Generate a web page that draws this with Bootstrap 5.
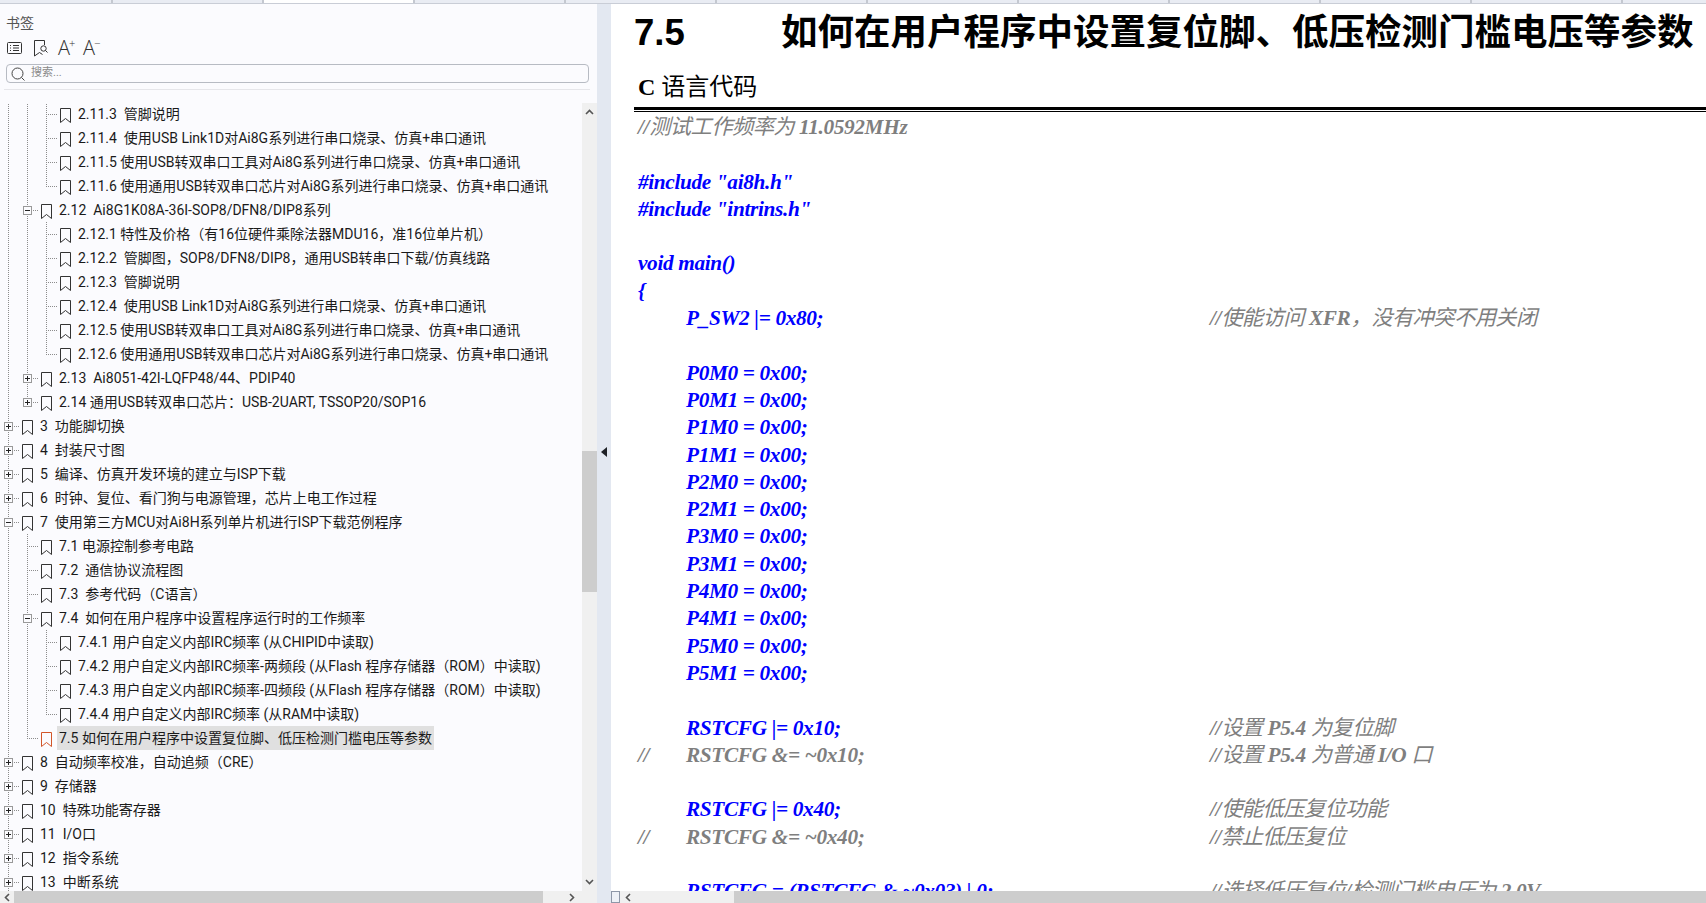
<!DOCTYPE html>
<html lang="zh-CN">
<head>
<meta charset="UTF-8">
<title>书签</title>
<link href="https://cdn.jsdelivr.net/npm/bootstrap@5.3.0/dist/css/bootstrap.min.css" rel="stylesheet">
<style>
body { height: 903px; overflow: hidden; background: #fff; color: #1a1a1a; font-family: "Roboto", "Noto Sans CJK SC", sans-serif; }

/* tab strip */
.tabs { height: 4px; background: #e9ecf3; border-bottom: 1px solid #c9cdd6; }
.tabs i { width: 151px; flex: none; border-right: 2px solid #c4c8d0; }
.tabs i:first-child { width: 113px; }
.tabs i.on { background: #fff; }

/* bookmarks panel */
.panel { width: 597px; flex: none; background: #fbfbfe; }
.panel-title { font-size: 14px; line-height: 20px; color: #555; padding: 9px 0 0 6px; height: 31px; }
.tools { height: 26px; padding-left: 7px; gap: 12px; color: #333; }
.tools svg { display: block; }
.aa { font-family: "Open Sans", sans-serif; font-weight: 300; font-size: 20px; line-height: 22px; width: 15px; color: #333; margin-left: -2px; margin-right: 0; white-space: nowrap; }
.aa sup { font-size: 11px; top: -.75em; margin-left: -1px; }
.search { height: 19px; margin: 3px 8px 0 6px; border: 1px solid #b7bbc3; border-radius: 4px; padding-left: 4px; gap: 6px; background: #fbfbfe; font-size: 11px; color: #8a8a8a; }
.panel-sep { height: 1px; background: #e6e6ea; margin: 6px 7px 13px 4px; }

/* tree */
.tree { height: 788px; overflow: hidden; font-size: 14px; line-height: 24px; }
.tree span { white-space: pre; }
.tr { height: 24px; display: flex; align-items: flex-start; }
.tr:first-child { margin-top: -1px; }
.c { display: block; width: 19px; height: 24px; flex: none; }
.v { background: repeating-linear-gradient(#8c8c8c 0 1px, transparent 1px 2px) 8px 0 / 1px 100% no-repeat; }
.t { background: repeating-linear-gradient(#8c8c8c 0 1px, transparent 1px 2px) 8px 0 / 1px 100% no-repeat, repeating-linear-gradient(90deg, #8c8c8c 0 1px, transparent 1px 2px) 8px 12px / 11px 1px no-repeat; }
.l { background: repeating-linear-gradient(#8c8c8c 0 1px, transparent 1px 2px) 8px 0 / 1px 12px no-repeat, repeating-linear-gradient(90deg, #8c8c8c 0 1px, transparent 1px 2px) 8px 12px / 11px 1px no-repeat; }
.x { display: block; width: 9px; height: 9px; margin: 8px 0 0 4px; border: 1px solid #999; background: #fbfbfe; }
.x.minus { background: linear-gradient(#222, #222) center / 5px 1px no-repeat #fbfbfe; }
.x.plus { background: linear-gradient(#222, #222) center / 5px 1px no-repeat, linear-gradient(#222, #222) center / 1px 5px no-repeat, #fbfbfe; }
.bm { width: 11px; height: 15px; flex: none; margin: 6px 7px 0 3px; color: #333; }
.tr.on .bm { color: #d2562a; margin-right: 5px; }
.tr.on span { background: #e0e0e0; padding: 0 2px; }

/* scrollbars */
.vbar { width: 15px; height: 788px; flex: none; background: #f0f0f0; }
.vbar .thumb { width: 15px; height: 141px; margin-top: 336px; margin-bottom: auto; background: #cdcdcd; }
.chev { display: block; flex: none; color: #555; }
.hbar { height: 12px; background: #f0f0f0; }
.hbar .chev { margin-top: 2px; }
.hbar .thumb { background: #cdcdcd; height: 12px; }
.corner { width: 15px; background: #f0f0f0; }

.splitter { width: 14px; flex: none; background: #e3e8f1; padding-top: 443px; padding-left: 4px; }
.splitter div { width: 0; height: 0; border: 5px solid transparent; border-left-width: 0; border-right: 6px solid #1e2126; }

/* document */
.doc { min-width: 0; background: #fff; }
.page { height: 887px; overflow: hidden; padding-left: 23px; }
.ttl { height: 58px; font: bold 36.5px/58px "Liberation Sans", "Noto Sans CJK SC", sans-serif; color: #000; white-space: nowrap; }
.ttl b { width: 147px; flex: none; }
.sec { height: 45px; padding: 5px 0 0 4px; font: 24px/40px "Liberation Serif", "Noto Sans CJK SC", serif; color: #000; }
.rule { height: 5px; border-top: 3px solid #000; border-bottom: 1px solid #000; margin-bottom: 2px; }
.ln { height: 27.3px; padding-left: 4px; font: italic bold 21.3px/27.3px "Liberation Serif", "Noto Sans CJK SC", serif; letter-spacing: -.35px; white-space: pre; display: flex; }
.ln .a { width: 48px; flex: none; }
.ln .b { width: 524px; flex: none; }
.ln em { font-weight: 400; letter-spacing: -.6px; }
.k { color: #0000ff; }
.g { color: #7f7f7f; }
.pageno { width: 9px; height: 12px; flex: none; background: #eef1f7; border: 1px solid #8e97a8; }
</style>
</head>
<body>
<svg width="0" height="0" class="d-block">
  <symbol id="bm" viewBox="0 0 11 15"><path d="M.5.5h10v14l-5-4-5 4z" fill="none" stroke="currentColor"/></symbol>
  <symbol id="up" viewBox="0 0 9 6"><path d="M1 5l3.5-3.5L8 5" fill="none" stroke="currentColor" stroke-width="1.6"/></symbol>
  <symbol id="dn" viewBox="0 0 9 6"><path d="M1 1l3.5 3.5L8 1" fill="none" stroke="currentColor" stroke-width="1.6"/></symbol>
  <symbol id="lf" viewBox="0 0 6 9"><path d="M5 1L1.5 4.5 5 8" fill="none" stroke="currentColor" stroke-width="1.6"/></symbol>
  <symbol id="rt" viewBox="0 0 6 9"><path d="M1 1l3.5 3.5L1 8" fill="none" stroke="currentColor" stroke-width="1.6"/></symbol>
</svg>

<div class="tabs d-flex">
  <i></i><i></i><i class="on"></i><i></i><i></i><i></i><i></i><i></i><i></i><i></i><i></i><i></i>
</div>

<div class="d-flex">
  <aside class="panel d-flex flex-column">
    <div class="panel-title">书签</div>
    <div class="tools d-flex align-items-center">
      <svg width="15" height="12" viewBox="0 0 15 12" fill="none" stroke="currentColor"><rect x=".5" y=".5" width="14" height="11" rx="1"/><path d="M3 3.5h1M3 6h1M3 8.5h1M6 3.5h6M6 6h6M6 8.5h6"/></svg>
      <svg width="14" height="17" viewBox="0 0 14 17" fill="none" stroke="currentColor"><path d="M10.500 5V.5H.5v15.500l5-3.500 3 2"/><circle cx="9.500" cy="8.500" r="2.700"/><path d="M11.500 10.500l2 2"/></svg>
      <span class="aa">A<sup>+</sup></span>
      <span class="aa">A<sup>−</sup></span>
    </div>
    <div class="search d-flex align-items-center">
      <svg width="14" height="14" viewBox="0 0 14 14" fill="none" stroke="#444"><circle cx="6.500" cy="6.500" r="5.500"/><path d="M10.500 10.500l3 3"/></svg>
      <span>搜索...</span>
    </div>
    <div class="panel-sep"></div>
    <div class="d-flex">
      <div class="flex-grow-1" style="min-width:0">
        <div class="tree">
          <div class="tr"><i class="c v"></i><i class="c v"></i><i class="c t"></i><svg class="bm"><use href="#bm"/></svg><span>2.11.3  管脚说明</span></div>
          <div class="tr"><i class="c v"></i><i class="c v"></i><i class="c t"></i><svg class="bm"><use href="#bm"/></svg><span>2.11.4  使用USB Link1D对Ai8G系列进行串口烧录、仿真+串口通讯</span></div>
          <div class="tr"><i class="c v"></i><i class="c v"></i><i class="c t"></i><svg class="bm"><use href="#bm"/></svg><span>2.11.5 使用USB转双串口工具对Ai8G系列进行串口烧录、仿真+串口通讯</span></div>
          <div class="tr"><i class="c v"></i><i class="c v"></i><i class="c l"></i><svg class="bm"><use href="#bm"/></svg><span>2.11.6 使用通用USB转双串口芯片对Ai8G系列进行串口烧录、仿真+串口通讯</span></div>
          <div class="tr"><i class="c v"></i><i class="c t"><b class="x minus"></b></i><svg class="bm"><use href="#bm"/></svg><span>2.12  Ai8G1K08A-36I-SOP8/DFN8/DIP8系列</span></div>
          <div class="tr"><i class="c v"></i><i class="c v"></i><i class="c t"></i><svg class="bm"><use href="#bm"/></svg><span>2.12.1 特性及价格（有16位硬件乘除法器MDU16，准16位单片机）</span></div>
          <div class="tr"><i class="c v"></i><i class="c v"></i><i class="c t"></i><svg class="bm"><use href="#bm"/></svg><span>2.12.2  管脚图，SOP8/DFN8/DIP8，通用USB转串口下载/仿真线路</span></div>
          <div class="tr"><i class="c v"></i><i class="c v"></i><i class="c t"></i><svg class="bm"><use href="#bm"/></svg><span>2.12.3  管脚说明</span></div>
          <div class="tr"><i class="c v"></i><i class="c v"></i><i class="c t"></i><svg class="bm"><use href="#bm"/></svg><span>2.12.4  使用USB Link1D对Ai8G系列进行串口烧录、仿真+串口通讯</span></div>
          <div class="tr"><i class="c v"></i><i class="c v"></i><i class="c t"></i><svg class="bm"><use href="#bm"/></svg><span>2.12.5 使用USB转双串口工具对Ai8G系列进行串口烧录、仿真+串口通讯</span></div>
          <div class="tr"><i class="c v"></i><i class="c v"></i><i class="c l"></i><svg class="bm"><use href="#bm"/></svg><span>2.12.6 使用通用USB转双串口芯片对Ai8G系列进行串口烧录、仿真+串口通讯</span></div>
          <div class="tr"><i class="c v"></i><i class="c t"><b class="x plus"></b></i><svg class="bm"><use href="#bm"/></svg><span>2.13  Ai8051-42I-LQFP48/44、PDIP40</span></div>
          <div class="tr"><i class="c v"></i><i class="c l"><b class="x plus"></b></i><svg class="bm"><use href="#bm"/></svg><span>2.14 通用USB转双串口芯片：USB-2UART, TSSOP20/SOP16</span></div>
          <div class="tr"><i class="c t"><b class="x plus"></b></i><svg class="bm"><use href="#bm"/></svg><span>3  功能脚切换</span></div>
          <div class="tr"><i class="c t"><b class="x plus"></b></i><svg class="bm"><use href="#bm"/></svg><span>4  封装尺寸图</span></div>
          <div class="tr"><i class="c t"><b class="x plus"></b></i><svg class="bm"><use href="#bm"/></svg><span>5  编译、仿真开发环境的建立与ISP下载</span></div>
          <div class="tr"><i class="c t"><b class="x plus"></b></i><svg class="bm"><use href="#bm"/></svg><span>6  时钟、复位、看门狗与电源管理，芯片上电工作过程</span></div>
          <div class="tr"><i class="c t"><b class="x minus"></b></i><svg class="bm"><use href="#bm"/></svg><span>7  使用第三方MCU对Ai8H系列单片机进行ISP下载范例程序</span></div>
          <div class="tr"><i class="c v"></i><i class="c t"></i><svg class="bm"><use href="#bm"/></svg><span>7.1 电源控制参考电路</span></div>
          <div class="tr"><i class="c v"></i><i class="c t"></i><svg class="bm"><use href="#bm"/></svg><span>7.2  通信协议流程图</span></div>
          <div class="tr"><i class="c v"></i><i class="c t"></i><svg class="bm"><use href="#bm"/></svg><span>7.3  参考代码（C语言）</span></div>
          <div class="tr"><i class="c v"></i><i class="c t"><b class="x minus"></b></i><svg class="bm"><use href="#bm"/></svg><span>7.4  如何在用户程序中设置程序运行时的工作频率</span></div>
          <div class="tr"><i class="c v"></i><i class="c v"></i><i class="c t"></i><svg class="bm"><use href="#bm"/></svg><span>7.4.1 用户自定义内部IRC频率 (从CHIPID中读取)</span></div>
          <div class="tr"><i class="c v"></i><i class="c v"></i><i class="c t"></i><svg class="bm"><use href="#bm"/></svg><span>7.4.2 用户自定义内部IRC频率-两频段 (从Flash 程序存储器（ROM）中读取)</span></div>
          <div class="tr"><i class="c v"></i><i class="c v"></i><i class="c t"></i><svg class="bm"><use href="#bm"/></svg><span>7.4.3 用户自定义内部IRC频率-四频段 (从Flash 程序存储器（ROM）中读取)</span></div>
          <div class="tr"><i class="c v"></i><i class="c v"></i><i class="c l"></i><svg class="bm"><use href="#bm"/></svg><span>7.4.4 用户自定义内部IRC频率 (从RAM中读取)</span></div>
          <div class="tr on"><i class="c v"></i><i class="c l"></i><svg class="bm"><use href="#bm"/></svg><span>7.5 如何在用户程序中设置复位脚、低压检测门槛电压等参数</span></div>
          <div class="tr"><i class="c t"><b class="x plus"></b></i><svg class="bm"><use href="#bm"/></svg><span>8  自动频率校准，自动追频（CRE）</span></div>
          <div class="tr"><i class="c t"><b class="x plus"></b></i><svg class="bm"><use href="#bm"/></svg><span>9  存储器</span></div>
          <div class="tr"><i class="c t"><b class="x plus"></b></i><svg class="bm"><use href="#bm"/></svg><span>10  特殊功能寄存器</span></div>
          <div class="tr"><i class="c t"><b class="x plus"></b></i><svg class="bm"><use href="#bm"/></svg><span>11  I/O口</span></div>
          <div class="tr"><i class="c t"><b class="x plus"></b></i><svg class="bm"><use href="#bm"/></svg><span>12  指令系统</span></div>
          <div class="tr"><i class="c t"><b class="x plus"></b></i><svg class="bm"><use href="#bm"/></svg><span>13  中断系统</span></div>
        </div>
        <div class="hbar d-flex">
          <svg class="chev ms-1 me-1" width="6" height="9"><use href="#lf"/></svg>
          <div class="thumb" style="width:529px"></div>
          <svg class="chev ms-auto" width="6" height="9" style="margin-right:7px"><use href="#rt"/></svg>
        </div>
      </div>
      <div class="d-flex flex-column">
        <div class="vbar d-flex flex-column align-items-center">
          <svg class="chev" width="9" height="6" style="margin-top:6px"><use href="#up"/></svg>
          <div class="thumb"></div>
          <svg class="chev" width="9" height="6" style="margin-bottom:6px"><use href="#dn"/></svg>
        </div>
        <div class="corner flex-grow-1"></div>
      </div>
    </div>
  </aside>

  <div class="splitter"><div></div></div>

  <main class="doc flex-grow-1">
    <div class="page">
      <div class="ttl d-flex"><b>7.5</b><span>如何在用户程序中设置复位脚、低压检测门槛电压等参数</span></div>
      <div class="sec"><b>C</b> 语言代码</div>
      <div class="rule"></div>
      <div class="ln g"><span>//<em>测试工作频率为</em> 11.0592MHz</span></div>
      <div class="ln"></div>
      <div class="ln k">#include "ai8h.h"</div>
      <div class="ln k">#include "intrins.h"</div>
      <div class="ln"></div>
      <div class="ln k">void main()</div>
      <div class="ln k">{</div>
      <div class="ln k"><span class="a"></span><span class="b">P_SW2 |= 0x80;</span><span class="g">//<em>使能访问</em> XFR<em>，没有冲突不用关闭</em></span></div>
      <div class="ln"></div>
      <div class="ln k"><span class="a"></span><span class="b">P0M0 = 0x00;</span></div>
      <div class="ln k"><span class="a"></span><span class="b">P0M1 = 0x00;</span></div>
      <div class="ln k"><span class="a"></span><span class="b">P1M0 = 0x00;</span></div>
      <div class="ln k"><span class="a"></span><span class="b">P1M1 = 0x00;</span></div>
      <div class="ln k"><span class="a"></span><span class="b">P2M0 = 0x00;</span></div>
      <div class="ln k"><span class="a"></span><span class="b">P2M1 = 0x00;</span></div>
      <div class="ln k"><span class="a"></span><span class="b">P3M0 = 0x00;</span></div>
      <div class="ln k"><span class="a"></span><span class="b">P3M1 = 0x00;</span></div>
      <div class="ln k"><span class="a"></span><span class="b">P4M0 = 0x00;</span></div>
      <div class="ln k"><span class="a"></span><span class="b">P4M1 = 0x00;</span></div>
      <div class="ln k"><span class="a"></span><span class="b">P5M0 = 0x00;</span></div>
      <div class="ln k"><span class="a"></span><span class="b">P5M1 = 0x00;</span></div>
      <div class="ln"></div>
      <div class="ln k"><span class="a"></span><span class="b">RSTCFG |= 0x10;</span><span class="g">//<em>设置</em> P5.4 <em>为复位脚</em></span></div>
      <div class="ln g"><span class="a">//</span><span class="b">RSTCFG &amp;= ~0x10;</span><span>//<em>设置</em> P5.4 <em>为普通</em> I/O <em>口</em></span></div>
      <div class="ln"></div>
      <div class="ln k"><span class="a"></span><span class="b">RSTCFG |= 0x40;</span><span class="g">//<em>使能低压复位功能</em></span></div>
      <div class="ln g"><span class="a">//</span><span class="b">RSTCFG &amp;= ~0x40;</span><span>//<em>禁止低压复位</em></span></div>
      <div class="ln"></div>
      <div class="ln k"><span class="a"></span><span class="b">RSTCFG = (RSTCFG &amp; ~0x03) | 0;</span><span class="g">//<em>选择低压复位</em>/<em>检测门槛电压为</em> 2.0V</span></div>
    </div>
    <div class="hbar d-flex">
      <div class="pageno"></div>
      <svg class="chev" width="6" height="9" style="margin-left:5px"><use href="#lf"/></svg>
      <div class="thumb flex-grow-1" style="margin-left:103px"></div>
    </div>
  </main>
</div>
<script src="https://cdn.jsdelivr.net/npm/bootstrap@5.3.0/dist/js/bootstrap.bundle.min.js"></script>
</body>
</html>
